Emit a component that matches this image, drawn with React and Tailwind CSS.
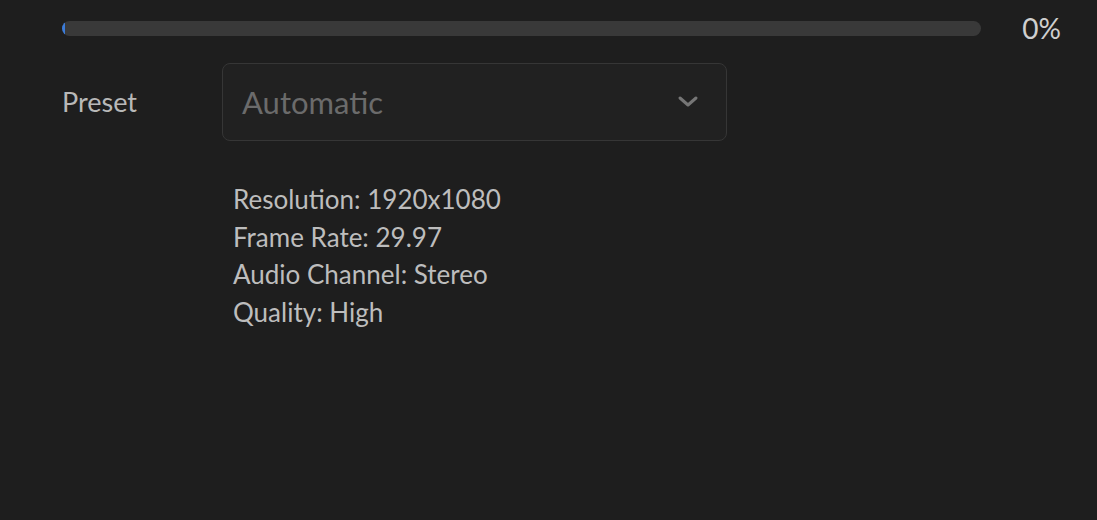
export default function App() {
  return (
    <div
      className="w-[1097px] h-[520px] bg-[#1e1e1e] text-[#c6c6c6] overflow-hidden"
      style={{ fontFamily: "Lato, 'Open Sans', sans-serif" }}
    >
      <div className="flex items-center pl-[62px] pr-[36px] pt-[21px]">
        <div className="flex-1 h-[15px] rounded-full bg-[#393939] overflow-hidden">
          <div className="w-[3px] h-full bg-[#3b7bd8]" />
        </div>
        <div className="ml-[41px] text-[28px] leading-[15px] text-[#cfcfcf]">0%</div>
      </div>
      <div className="flex items-center pl-[62px] mt-[27px]">
        <div className="w-[160px] text-[27px] text-[#b8b8b8]">Preset</div>
        <div className="w-[505px] h-[78px] rounded-[8px] border border-[#363636] bg-[#212121] flex items-center justify-between pl-[19px] pr-[27px]">
          <span className="text-[31px] text-[#6b6b6b]">Automatic</span>
          <svg width="22" height="14" viewBox="0 0 22 14" fill="none">
            <path d="M3 3 L11 10 L19 3" stroke="#767676" strokeWidth="3" strokeLinecap="round" strokeLinejoin="round" />
          </svg>
        </div>
      </div>
      <div className="pl-[233px] mt-[40px] text-[26px] leading-[37.5px] text-[#bdbdbd]">
        <div>Resolution: 1920x1080</div>
        <div>Frame Rate: 29.97</div>
        <div>Audio Channel: Stereo</div>
        <div>Quality: High</div>
      </div>
    </div>
  );
}
